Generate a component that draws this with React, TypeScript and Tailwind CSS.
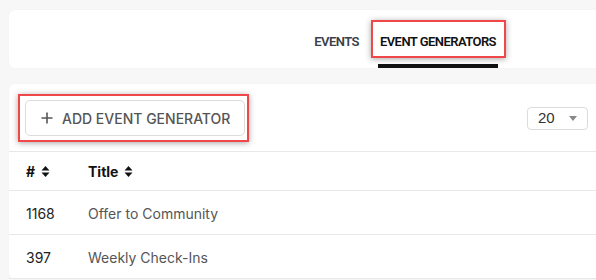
import React from "react";

function SortIcon() {
  return (
    <svg width="9" height="13" viewBox="0 0 9 13" className="ml-[6px] inline-block">
      <path d="M0.5 5.5 L4.5 1 L8.5 5.5 Z" fill="#111" />
      <path d="M0.5 7.5 L4.5 12 L8.5 7.5 Z" fill="#111" />
    </svg>
  );
}

export default function App() {
  const rows = [
    { id: "1168", title: "Offer to Community" },
    { id: "397", title: "Weekly Check-Ins" },
  ];
  return (
    <div
      className="w-[596px] h-[280px] overflow-hidden bg-[#f7f7f7] pl-[9px] pt-[10px]"
      style={{ fontFamily: "Inter, 'Noto Sans', sans-serif" }}
    >
      <div className="w-[595px] h-[58px] bg-white rounded-md shadow-[0_0_2px_rgba(0,0,0,0.04)] flex justify-end items-end pr-[106px]">
        <div className="flex items-end gap-[17px] font-['Roboto',sans-serif]">
          <div className="px-[2px] pb-[14px] border-b-4 border-transparent text-[13px] leading-[16px] font-semibold text-[#3a3f4a] tracking-[-0.55px]">
            EVENTS
          </div>
          <div className="relative px-[2px] pb-[14px] border-b-4 border-[#111] text-[13px] leading-[16px] font-semibold text-[#111] tracking-[-0.55px]">
            EVENT GENERATORS
            <div className="absolute left-[-7px] right-[-8px] top-[-14px] bottom-[6px] border-2 border-[#f04848] shadow-[0_1px_6px_rgba(0,0,0,0.35)]" />
          </div>
        </div>
      </div>

      <div className="mt-[16px] w-[595px] bg-white rounded-md shadow-[0_0_2px_rgba(0,0,0,0.04)]">
        <div className="flex items-center justify-between pl-[16px] pr-[16px] pt-[16px] pb-[15px] border-b border-[#e8e8e8]">
          <div className="relative">
            <button className="h-[36px] w-[220px] flex items-center pl-[15px] border border-[#dcdcdc] rounded-[5px] bg-white text-[#555] text-[14px] font-medium">
              <svg width="12" height="12" viewBox="0 0 12 12" className="mr-[9px]">
                <path d="M6 0.5 V11.5 M0.5 6 H11.5" stroke="#555" strokeWidth="1.6" />
              </svg>
              ADD EVENT GENERATOR
            </button>
            <div className="absolute left-[-7px] right-[-4px] top-[-6px] bottom-[-6px] border-2 border-[#f04848] shadow-[0_1px_6px_rgba(0,0,0,0.35)]" />
          </div>
          <div className="h-[23px] w-[61px] border border-[#dcdcdc] rounded-[4px] flex items-center justify-between pl-[10px] pr-[10px] text-[15px] text-[#333] font-['Liberation_Sans',sans-serif]">
            <span>20</span>
            <svg width="8" height="5" viewBox="0 0 8 5">
              <path d="M0 0 H8 L4 5 Z" fill="#888" />
            </svg>
          </div>
        </div>
        <div className="flex items-center h-[39px] pt-[1px] border-b border-[#e8e8e8] text-[14px] font-bold text-[#111]">
          <div className="w-[79px] pl-[17px] flex items-center">
            #<SortIcon />
          </div>
          <div className="flex items-center">
            Title<SortIcon />
          </div>
        </div>
        {rows.map((r) => (
          <div key={r.id} className="flex items-center h-[44px] pt-[1px] border-b border-[#e8e8e8] text-[14px]">
            <div className="w-[79px] pl-[17px] text-[#222]">{r.id}</div>
            <div className="text-[#555]">{r.title}</div>
          </div>
        ))}
      </div>
    </div>
  );
}
